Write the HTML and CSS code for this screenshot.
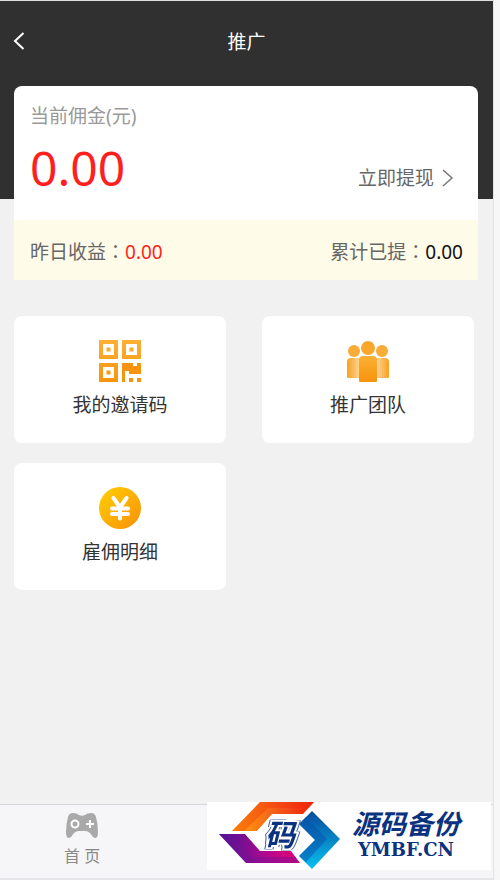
FILE: index.html
```
<!DOCTYPE html>
<html lang="zh-CN">
<head>
	<meta charset="UTF-8">
	<meta name="viewport" content="width=device-width, initial-scale=1.0">
	<link rel="stylesheet" href="styles.css">
	<title>推广</title>
</head>
<body>
	<div class="page">
		<header class="header">
			<a class="back" href="#" aria-label="返回">
				<svg width="12" height="18" viewBox="0 0 12 18"><path d="M10.500 1 2 9l8.500 8" fill="none" stroke="#fff" stroke-width="2"/></svg>
			</a>
			<h1>推广</h1>
		</header>
		<main>
			<section class="wallet">
				<div class="wallet-main">
					<div class="wallet-label">当前佣金(元)</div>
					<div class="wallet-row">
						<strong class="amount">0.00</strong>
						<a class="withdraw" href="#">立即提现
							<svg width="12" height="20" viewBox="0 0 12 20"><path d="m1 2 9 8-9 8" fill="none" stroke="#777" stroke-width="1.500"/></svg>
						</a>
					</div>
				</div>
				<div class="wallet-stats">
					<span>昨日收益<span lang="zh-TW">：</span><b class="red">0.00</b></span>
					<span>累计已提<span lang="zh-TW">：</span><b>0.00</b></span>
				</div>
			</section>
			<nav class="tiles">
				<a class="tile" href="#">
					<svg width="42" height="42" viewBox="0 0 42 42" fill="url(#gold)">
						<defs>
							<linearGradient id="gold" x1="0" y1="0" x2="0" y2="1">
								<stop offset="0" stop-color="#fbb034"/>
								<stop offset="1" stop-color="#f7930d"/>
							</linearGradient>
						</defs>
						<path fill-rule="evenodd" d="M0 0h19v19H0zM4 4v11h11V4zM7.500 7.500h4v4h-4zM23 0h19v19H23zM27 4v11h11V4zM30.500 7.500h4v4h-4zM0 23h19v19H0zM4 27v11h11V27zM7.500 30.500h4v4h-4z"/>
						<path d="M23 23h11v3h4v-3h4v11H30v-3h-4v11h-3zM30 38h4v4h-4zM38 38h4v4h-4z" fill="#f7930d"/>
					</svg>
					<span>我的邀请码</span>
				</a>
				<a class="tile" href="#">
					<svg width="42" height="42" viewBox="0 0 42 42">
						<defs>
							<linearGradient id="left" x1="0" y1="0" x2="1" y2="0">
								<stop offset="0" stop-color="#f9a01e"/>
								<stop offset="1" stop-color="#fdd79d"/>
							</linearGradient>
							<linearGradient id="right" x1="0" y1="0" x2="1" y2="0">
								<stop offset="0" stop-color="#fdd79d"/>
								<stop offset="1" stop-color="#f9a01e"/>
							</linearGradient>
						</defs>
						<circle cx="7" cy="11" r="6" fill="#f9ab38"/>
						<circle cx="35" cy="11" r="6" fill="#f9ab38"/>
						<path d="M0 22q0-4 4-4h9v20H1q-1 0-1-1z" fill="url(#left)"/>
						<path d="M29 18h9q4 0 4 4v15q0 1-1 1H29z" fill="url(#right)"/>
						<circle cx="21" cy="8" r="7" fill="#f9a62c"/>
						<path d="M12 20q0-4 4-4h10q4 0 4 4v21q0 1-1 1H13q-1 0-1-1z" fill="url(#gold)"/>
					</svg>
					<span>推广团队</span>
				</a>
				<a class="tile" href="#">
					<svg width="42" height="42" viewBox="0 0 42 42">
						<defs>
							<linearGradient id="coin" x1="0" y1="0" x2="1" y2="1">
								<stop offset="0" stop-color="#ffd000"/>
								<stop offset="1" stop-color="#f8900b"/>
							</linearGradient>
						</defs>
						<circle cx="21" cy="21" r="21" fill="url(#coin)"/>
						<path d="m14.500 11 6.500 9.500L27.500 11M21 20v11.500M13 21.500h16M13 27h16" fill="none" stroke="#fff" stroke-width="4" stroke-linecap="round" stroke-linejoin="round"/>
					</svg>
					<span>雇佣明细</span>
				</a>
			</nav>
		</main>
		<footer class="tabbar">
			<a class="tab" href="#">
				<svg width="34" height="25" viewBox="0 0 34 25">
					<path d="M8 0q4 0 6 2 3 1.500 6 0 2-2 6-2 4 0 5 4 2 7 2 15 0 6-3 6-2 0-3.500-3Q24 18 20 18h-6q-4 0-6.500 4Q6 25 4 25q-3 0-3-6Q1 11 3 4q1-4 5-4z" fill="#a9a9a9"/>
					<circle cx="10" cy="11" r="3.500" fill="none" stroke="#fff" stroke-width="2"/>
					<path d="M25 7v8M21 11h8" stroke="#fff" stroke-width="2"/>
				</svg>
				<span>首 页</span>
			</a>
			<div class="brand">
				<svg width="124" height="68" viewBox="0 0 124 68">
					<defs>
						<linearGradient id="b-top" x1="0" y1="0" x2="1" y2="0">
							<stop offset="0" stop-color="#ffad08"/>
							<stop offset=".5" stop-color="#f6601b"/>
							<stop offset="1" stop-color="#ee2009"/>
						</linearGradient>
						<linearGradient id="b-right" x1="0" y1="0" x2="0" y2="1">
							<stop offset="0" stop-color="#064a9d"/>
							<stop offset="1" stop-color="#08c2ef"/>
						</linearGradient>
						<linearGradient id="b-low" x1="0" y1="0" x2="1" y2="0">
							<stop offset="0" stop-color="#3f1496"/>
							<stop offset=".6" stop-color="#b6088e"/>
							<stop offset="1" stop-color="#e60072"/>
						</linearGradient>
					</defs>
					<path d="M41 0h54L84 12H53L38 29H13z" fill="url(#b-top)"/>
					<path d="M41 0h54l-5 6H49L25 29H13z" fill="#f32b08" opacity=".35"/>
					<path d="m93 9 28 28-28 30-13-13 16-16-16-16z" fill="url(#b-right)"/>
					<path d="m87 15 21 22-21 23-7-6 16-16-16-16z" fill="#0750ae" opacity=".5"/>
					<path d="M0 32h26l15 17h31l9 12H27z" fill="url(#b-low)"/>
					<path d="M0 32h10l22 23h44l5 6H27z" fill="#731395" opacity=".45"/>
					<text class="brand-mark" x="46" y="44">码</text>
				</svg>
				<div class="brand-text">
					<span class="brand-name">源码备份</span>
					<span class="brand-url">YMBF.CN</span>
				</div>
			</div>
		</footer>
	</div>
</body>
</html>
```
FILE: styles.css
```
* {
	box-sizing: border-box;
}

body {
	margin: 0;
	background: #f7f7f8;
	color: #333;
	font: 19px/28px "Noto Sans", "Noto Sans CJK SC", sans-serif;
}

a {
	color: inherit;
	text-decoration: none;
}

svg {
	display: block;
}

.page {
	display: flex;
	flex-direction: column;
	min-height: 100vh;
	margin-right: 6px;
	background: #f1f1f1;
	border-top: 1px solid #dde1df;
	border-right: 1px solid #e4e4e4;
}

.header {
	display: grid;
	grid-template-columns: 40px 1fr 40px;
	align-items: start;
	height: 198px;
	padding-top: 26px;
	background: #303030;
	color: #fff;
}
.header h1 {
	margin: 0;
	font-size: 19px;
	font-weight: normal;
	line-height: 30px;
	text-align: center;
}
.back {
	padding: 5px 0 5px 13px;
}

main {
	flex: 1;
	margin-top: -113px;
}

.wallet {
	margin: 0 15px 36px 14px;
	background: #fff;
	border-radius: 8px 8px 0 0;
}
.wallet-main {
	height: 134px;
	padding: 16px 24px 0 16px;
}
.wallet-label {
	color: #999;
}
.wallet-row {
	display: flex;
	align-items: flex-end;
	justify-content: space-between;
}
.amount {
	color: #ff1f1f;
	font-size: 48px;
	font-weight: normal;
	line-height: 76px;
}
.withdraw {
	display: flex;
	align-items: center;
	gap: 8px;
	margin-bottom: 14px;
	color: #666;
}
.wallet-stats {
	display: flex;
	align-items: center;
	justify-content: space-between;
	height: 60px;
	padding: 4px 15px 0 16px;
	background: #fffbe9;
	color: #666;
}
.wallet-stats b {
	color: #111;
	font-weight: normal;
}
.wallet-stats .red {
	color: #ff1f1f;
}

.tiles {
	display: grid;
	grid-template-columns: 1fr 1fr;
	gap: 20px 36px;
	padding: 0 19px 20px 14px;
}
.tile {
	display: flex;
	flex-direction: column;
	align-items: center;
	gap: 9px;
	height: 127px;
	padding-top: 24px;
	background: #fff;
	border-radius: 8px;
}

.tabbar {
	position: relative;
	height: 76px;
	background: #f6f6f9;
	border-top: 1px solid #d6d6da;
	border-bottom: 2px solid #e6e6ea;
}
.tab {
	display: flex;
	flex-direction: column;
	align-items: center;
	gap: 4px;
	width: 33.333%;
	padding-top: 8px;
	color: #888;
	font-size: 16px;
}

/* site badge, covers the right part of the tab bar */
.brand {
	position: absolute;
	top: -3px;
	right: 2px;
	display: flex;
	width: 284px;
	height: 68px;
	padding-left: 12px;
	background: #fff;
	color: #0b327f;
}
.brand-mark {
	fill: #0b327f;
	stroke: #fff;
	stroke-width: 4px;
	paint-order: stroke;
	font: italic bold 30px "Noto Sans CJK SC", sans-serif;
	filter: drop-shadow(1px 0 0 #3a5a9c) drop-shadow(-1px 0 0 #3a5a9c);
}
.brand-text {
	display: flex;
	flex: 1;
	flex-direction: column;
	align-items: center;
	padding: 9px 22px 0 0;
	white-space: nowrap;
}
.brand-name {
	font: italic bold 27px/24px "Noto Sans CJK SC", sans-serif;
}
.brand-url {
	font: bold 18px/30px "DejaVu Serif", serif;
}
```
